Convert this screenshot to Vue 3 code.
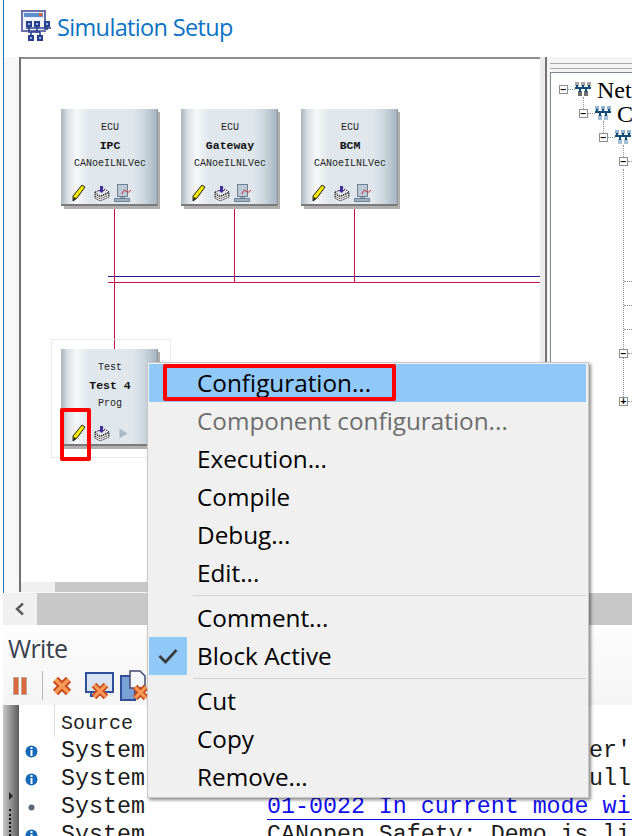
<script setup>
const ecus = [
  { key: 'ipc', top: 'ECU', name: 'IPC', bottom: 'CANoeILNLVec' },
  { key: 'gw', top: 'ECU', name: 'Gateway', bottom: 'CANoeILNLVec' },
  { key: 'bcm', top: 'ECU', name: 'BCM', bottom: 'CANoeILNLVec' }
]
const menuGroups = [
  [
    { label: 'Configuration...', active: true },
    { label: 'Component configuration...', disabled: true },
    { label: 'Execution...' },
    { label: 'Compile' },
    { label: 'Debug...' },
    { label: 'Edit...' }
  ],
  [{ label: 'Comment...' }, { label: 'Block Active', checked: true }],
  [{ label: 'Cut' }, { label: 'Copy' }, { label: 'Remove...' }]
]
const logs = [
  { icon: 'info', source: 'System', msg: "er'", cls: 'right' },
  { icon: 'info', source: 'System', msg: 'ull', cls: 'right' },
  { icon: 'dot', source: 'System', msg: '01-0022 In current mode wi', cls: 'link' },
  { icon: 'info', source: 'System', msg: 'CANopen Safety: Demo is li', cls: '' }
]
</script>

<template>
  <div class="page">
    <header class="head">
      <svg class="logo" width="32" height="32" viewBox="0 0 32 32">
        <rect x="1" y="1" width="23" height="20" fill="#eef1f8" stroke="#6a6fa8" stroke-width="2"/>
        <rect x="3" y="3" width="19" height="4" fill="#5b8fd0"/>
        <rect x="18" y="3" width="3" height="3" fill="#e0603a"/>
        <path d="M8 14v9M16 14v9M26 14v6M5 18h25M10 22v6M19 22v6M10 22h9" stroke="#2a3f8f" stroke-width="1.6" fill="none"/>
        <rect x="5" y="11" width="6" height="6" fill="#2a3f8f"/><rect x="7" y="13" width="2" height="2" fill="#9db4e0"/>
        <rect x="13" y="11" width="6" height="6" fill="#2a3f8f"/><rect x="15" y="13" width="2" height="2" fill="#9db4e0"/>
        <rect x="23" y="11" width="6" height="6" fill="#2a3f8f"/><rect x="25" y="13" width="2" height="2" fill="#9db4e0"/>
        <rect x="7" y="25" width="6" height="6" fill="#2a3f8f"/><rect x="9" y="27" width="2" height="2" fill="#9db4e0"/>
        <rect x="16" y="25" width="6" height="6" fill="#2a3f8f"/><rect x="18" y="27" width="2" height="2" fill="#9db4e0"/>
      </svg>
      <h1 class="title">Simulation Setup</h1>
    </header>

    <section class="work">
      <div class="leftcol">
        <div class="canvas">
          <span class="bus blue"></span>
          <span class="bus red"></span>
          <span class="drop d1"></span>
          <span class="drop d2"></span>
          <span class="drop d3"></span>
          <span class="drop d4"></span>

          <span class="frame"></span>

          <article v-for="(e, i) in ecus" :key="e.key" class="node" :class="'n' + i">
            <p class="t">{{ e.top }}</p>
            <p class="t b">{{ e.name }}</p>
            <p class="t">{{ e.bottom }}</p>
            <div class="tools">
              <svg width="16" height="18" viewBox="0 0 16 18"><path d="M11 1l3 2-8 11-4 3 0-5z" fill="#f5e800" stroke="#222" stroke-width="1"/><path d="M2 17l1-4 2 1.500z" fill="#111"/></svg>
              <svg class="stack" width="16" height="15" viewBox="0 0 16 15"><path d="M1 6l9-3 5 3-9 4zM1 6v2l5 3 9-4V6M1 8v2l5 3 9-4V7M1 10v2l5 3 9-4V9" fill="#fff" stroke="#222" stroke-width="1" stroke-dasharray="1.500 .8"/><path d="M6 0h3v4h2l-3.500 3L4 4h2z" fill="#3c2f96"/></svg>
              <svg class="mon" width="18" height="18" viewBox="0 0 18 18"><rect x="3.500" y="0.500" width="10" height="12" fill="#b9c9d6" stroke="#6f8090"/><path d="M6 13h5v2H6z" fill="#8da0b0"/><path d="M0.500 14.500h15v3H0.500z" fill="#9fb2c2" stroke="#6f8090"/><path d="M8 10q2-6 4-3t5-1" fill="none" stroke="#c8243c" stroke-width="1"/></svg>
            </div>
          </article>

          <article class="node n3">
            <p class="t">Test</p>
            <p class="t b">Test 4</p>
            <p class="t">Prog</p>
            <div class="tools">
              <svg width="16" height="18" viewBox="0 0 16 18"><path d="M11 1l3 2-8 11-4 3 0-5z" fill="#f5e800" stroke="#222" stroke-width="1"/><path d="M2 17l1-4 2 1.500z" fill="#111"/></svg>
              <svg class="stack" width="16" height="15" viewBox="0 0 16 15"><path d="M1 6l9-3 5 3-9 4zM1 6v2l5 3 9-4V6M1 8v2l5 3 9-4V7M1 10v2l5 3 9-4V9" fill="#fff" stroke="#222" stroke-width="1" stroke-dasharray="1.500 .8"/><path d="M6 0h3v4h2l-3.500 3L4 4h2z" fill="#3c2f96"/></svg>
              <svg class="play" width="9" height="11" viewBox="0 0 9 11"><path d="M0.500 0.500l8 5-8 5z" fill="#a9b9c6"/></svg>
            </div>
          </article>
          <span class="redbox small"></span>
        </div>
        <div class="hbar"><span class="hbtn"></span><span class="htrack"></span></div>
      </div>

      <div class="split"></div>

      <aside class="side">
        <div class="rules"></div>
        <div class="tree">
          <span class="vdot v1"></span><span class="vdot v2"></span><span class="vdot v3"></span><span class="vdot v4"></span>
          <span class="hdot h1"></span><span class="hdot h2"></span><span class="hdot h3"></span>
          <span class="hdot h4"></span><span class="hdot h5"></span><span class="hdot h6"></span><span class="hdot h7"></span><span class="hdot h8"></span><span class="hdot h9"></span>
          <span class="box b1">−</span><span class="box b2">−</span><span class="box b3">−</span><span class="box b4">−</span>
          <span class="box b5">−</span><span class="box b6">+</span>
          <svg class="net i1" width="16" height="14" viewBox="0 0 16 14"><path d="M0 0h4v4H0zM6 0h4v4H6zM12 0h4v4h-4z" fill="#a8a8a8"/><path d="M3 9h4v5H3zM9 9h4v5H9z" fill="#707070"/><path d="M0 6h16M2 3v3M8 3v3M14 3v3M5 6v4M11 6v4" stroke="#124a78" stroke-width="2" fill="none"/></svg>
          <svg class="net i2" width="16" height="14" viewBox="0 0 16 14"><path d="M0 0h4v4H0zM6 0h4v4H6zM12 0h4v4h-4z" fill="#90b4d2"/><path d="M3 9h4v5H3zM9 9h4v5H9z" fill="#a8c0d6"/><path d="M0 6h16M2 3v3M8 3v3M14 3v3M5 6v4M11 6v4" stroke="#124a78" stroke-width="2" fill="none"/></svg>
          <svg class="net i3" width="16" height="14" viewBox="0 0 16 14"><path d="M0 0h4v4H0zM6 0h4v4H6zM12 0h4v4h-4z" fill="#90b4d2"/><path d="M3 9h4v5H3zM9 9h4v5H9z" fill="#a8c0d6"/><path d="M0 6h16M2 3v3M8 3v3M14 3v3M5 6v4M11 6v4" stroke="#124a78" stroke-width="2" fill="none"/></svg>
          <span class="tx t1">Net</span>
          <span class="tx t2">CA</span>
        </div>
      </aside>
    </section>

    <div class="scroll">
      <button class="sbtn" type="button">
        <svg width="12" height="14" viewBox="0 0 12 14"><path d="M9 1.500L3 7l6 5.500" fill="none" stroke="#5a5a5a" stroke-width="2.400"/></svg>
      </button>
      <div class="track"></div>
    </div>

    <section class="write">
      <h2 class="wtitle">Write</h2>
      <div class="toolbar">
        <svg class="tb-pause" width="16" height="18" viewBox="0 0 16 18"><rect x="1.500" y="0.500" width="5" height="17" fill="#d9683c" stroke="#c0a898"/><rect x="9.500" y="0.500" width="5" height="17" fill="#d9683c" stroke="#c0a898"/></svg>
        <i class="tsep"></i>
        <svg class="tb-x" width="20" height="20" viewBox="0 0 20 20"><path d="M3.500 3.500l13 13M16.500 3.500l-13 13" stroke="#c94c1e" stroke-width="7.500"/><path d="M3.500 3.500l13 13M16.500 3.500l-13 13" stroke="#f79a58" stroke-width="3.500"/></svg>
        <svg class="tb-win" width="30" height="30" viewBox="0 0 30 30"><path d="M1 2h27v19H1z" fill="#d8e4f4" stroke="#2f4f98" stroke-width="2"/><path d="M6 21v4h8" fill="none" stroke="#2f4f98" stroke-width="2"/><path d="M9 14l12 12M21 14L9 26" stroke="#c94c1e" stroke-width="6.500"/><path d="M9 14l12 12M21 14L9 26" stroke="#f79a58" stroke-width="3"/></svg>
        <svg class="tb-file" width="30" height="31" viewBox="0 0 30 31"><path d="M1 6h14v24H1z" fill="#7aa0d8" stroke="#2f4f98" stroke-width="2"/><path d="M10 1h10l5 5v12H10z" fill="#f4f6fa" stroke="#444a70" stroke-width="1.500"/><path d="M15 17l11 11M26 17L15 28" stroke="#c94c1e" stroke-width="6.500"/><path d="M15 17l11 11M26 17L15 28" stroke="#f79a58" stroke-width="3"/></svg>
      </div>

      <div class="grid">
        <div class="strip">
          <span class="tri"></span>
          <span class="dots"></span>
        </div>
        <div class="table">
          <div class="thead"><span class="src">Source</span></div>
          <div v-for="(l, i) in logs" :key="i" class="row">
            <span class="ico">
              <svg v-if="l.icon === 'info'" width="13" height="13" viewBox="0 0 13 13"><circle cx="6.500" cy="6.500" r="6" fill="#1668b8"/><rect x="5.500" y="2" width="2" height="2" fill="#fff"/><rect x="5.500" y="5" width="2" height="6" fill="#fff"/></svg>
              <svg v-else width="7" height="7" viewBox="0 0 7 7"><circle cx="3.500" cy="3.500" r="3" fill="#606878"/></svg>
            </span>
            <span class="rsrc">{{ l.source }}</span>
            <span class="rmsg" :class="l.cls">{{ l.msg }}</span>
          </div>
        </div>
      </div>
    </section>

    <nav class="menu">
      <template v-for="(g, gi) in menuGroups" :key="gi">
        <div v-if="gi" class="sep"></div>
        <div v-for="m in g" :key="m.label" class="item" :class="{ on: m.active, off: m.disabled }">
          <span class="gut" :class="{ chk: m.checked }">
            <svg v-if="m.checked" width="20" height="16" viewBox="0 0 20 16"><path d="M1.500 8l6 6L18.500 2" fill="none" stroke="#3a3a3a" stroke-width="2.600"/></svg>
          </span>
          <span class="lab">{{ m.label }}</span>
        </div>
      </template>
      <span class="redbox big"></span>
    </nav>
  </div>
</template>

<style>
html, body { margin: 0; background: #fff; }
</style>

<style scoped>
.page { position: relative; width: 632px; height: 836px; overflow: hidden; background: #fff; display: flex; flex-direction: column; }
p, h1, h2 { margin: 0; font-weight: normal; }

.head { height: 57px; margin-left: 3px; border-left: 1px solid #1c6fb0; display: flex; align-items: center; padding-left: 17px; gap: 4px; box-sizing: border-box; flex: none; }
.logo { margin-top: -6px; }
.title { font: 23.500px/32px "Open Sans", sans-serif; color: #0a72c4; letter-spacing: -0.65px; margin-top: -3px; }

.work { height: 536px; flex: none; margin-left: 3px; border-left: 1px solid #1c6fb0; background: #f8f8f8; padding-left: 15px; display: flex; box-sizing: border-box; }
.leftcol { width: 521px; height: 535px; flex: none; border-left: 2px solid #707070; box-sizing: border-box; display: flex; flex-direction: column; }
.canvas { position: relative; height: 525px; background: #fff; border-top: 2px solid #8e8e8e; box-sizing: border-box; flex: none; }
.hbar { height: 10px; display: flex; flex: none; }
.hbtn { width: 34px; background: #efefef; }
.htrack { flex: 1; background: #c8c8c8; }
.split { width: 7px; background: #ececec; border-right: 2px solid #747474; box-sizing: border-box; flex: none; }
.side { flex: 1; min-width: 0; background: #f4f4f4; padding: 6px 0 0 3px; display: flex; flex-direction: column; }
.rules { height: 4px; flex: none; border-top: 1px solid #a8a8a8; border-bottom: 1px solid #a8a8a8; }
.tree { position: relative; margin-top: 3px; flex: 1; overflow: hidden; background: #fff; border-top: 1px solid #80868e; border-left: 1px solid #80868e; }

.bus { position: absolute; left: 87px; right: 0; height: 1px; }
.bus.blue { top: 217px; background: #20208c; }
.bus.red { top: 223px; background: #c8104c; }
.drop { position: absolute; width: 1px; background: #c8104c; }
.d1 { left: 93px; top: 150px; height: 73px; }
.d2 { left: 213px; top: 150px; height: 73px; }
.d3 { left: 333px; top: 150px; height: 73px; }
.d4 { left: 93px; top: 223px; height: 67px; }
.frame { position: absolute; left: 30px; top: 280px; width: 120px; height: 119px; border: 1px solid #ebebeb; box-sizing: border-box; }

.node { position: absolute; width: 96px; height: 97px; box-sizing: border-box; padding: 10px 0 0 2px; text-align: center; border-bottom: 2px solid #7a7a7a; background: linear-gradient(90deg, #a9b4bc 0%, #d9e0e6 7%, #f6f8fa 16%, #dfe6ec 30%, #dfe6ec 75%, #c9d4dc 88%, #a5b4c0 100%); box-shadow: 1px 0 0 #8a949c, 3px 3px 0 #b0b0b0; }
.n0 { left: 40px; top: 50px; }
.n1 { left: 160px; top: 50px; }
.n2 { left: 280px; top: 50px; }
.n3 { left: 40px; top: 290px; }
.t { font: 10px/18px "Liberation Mono", monospace; color: #222; }
.t.b { font-size: 11.500px; font-weight: bold; color: #111; }
.tools { position: absolute; left: 10px; top: 75px; display: flex; align-items: center; gap: 7px; }
.mon { margin-left: -3px; }
.play { margin-left: 2px; }

.redbox { position: absolute; border: 4px solid #f00; border-radius: 2px; box-sizing: border-box; }
.redbox.small { left: 39px; top: 349px; width: 31px; height: 53px; }
.redbox.big { left: 15px; top: 1px; width: 233px; height: 37px; }

.box { position: absolute; width: 7px; height: 7px; border: 1px solid #8e8e8e; background: #fff; font: bold 10px/7px "Liberation Sans", sans-serif; text-align: center; color: #000; }
.b1 { left: 8px; top: 12px; }
.b2 { left: 28px; top: 36px; }
.b3 { left: 48px; top: 60px; }
.b4 { left: 68px; top: 84px; }
.b5 { left: 68px; top: 276px; }
.b6 { left: 68px; top: 324px; }
.vdot { position: absolute; width: 0; border-left: 1px dotted #909090; }
.v1 { left: 32px; top: 24px; height: 12px; }
.v2 { left: 52px; top: 48px; height: 12px; }
.v3 { left: 72px; top: 72px; height: 12px; }
.v4 { left: 72px; top: 96px; height: 228px; }
.hdot { position: absolute; height: 0; border-top: 1px dotted #909090; }
.h1 { left: 17px; top: 16px; width: 7px; }
.h2 { left: 37px; top: 40px; width: 7px; }
.h3 { left: 57px; top: 64px; width: 7px; }
.h4 { left: 77px; top: 88px; width: 10px; }
.h5 { left: 73px; top: 208px; width: 12px; }
.h6 { left: 73px; top: 232px; width: 12px; }
.h7 { left: 73px; top: 256px; width: 12px; }
.h8 { left: 77px; top: 280px; width: 10px; }
.h9 { left: 77px; top: 328px; width: 10px; }
.net { position: absolute; }
.i1 { left: 24px; top: 9px; }
.i2 { left: 44px; top: 33px; }
.i3 { left: 64px; top: 57px; }
.tx { position: absolute; font: 24px/24px "Liberation Serif", serif; color: #000; white-space: nowrap; }
.t1 { left: 46px; top: 5px; }
.t2 { left: 66px; top: 29px; }

.scroll { height: 32px; flex: none; margin-left: 3px; display: flex; }
.sbtn { width: 34px; padding: 0; border: 0; background: #f0f0f0; display: flex; align-items: center; justify-content: center; }
.track { flex: 1; background: #c8c8c8; }

.write { flex: 1; margin-left: 3px; padding-top: 5px; background: linear-gradient(180deg, #fff 0, #fbfbfb 12px, #f6f6f6 70px, #f4f4f4 80px); display: flex; flex-direction: column; min-height: 0; }
.wtitle { font: 25px/36px "Open Sans", sans-serif; color: #37404c; padding-left: 5px; height: 36px; letter-spacing: -0.6px; }
.toolbar { height: 39px; flex: none; padding: 0 0 0 9px; display: flex; align-items: center; }
.tsep { width: 1px; height: 29px; background: #b8b8b8; margin-left: 14px; }
.tb-x { margin-left: 9px; }
.tb-win { margin-left: 13px; }
.tb-file { margin-left: 5px; }
.grid { flex: 1; display: flex; background: #fff; min-height: 0; }
.strip { position: relative; width: 16px; flex: none; background: linear-gradient(90deg, #c8c8c8, #5c5c5c); }
.tri { position: absolute; left: 6px; top: 87px; border-left: 4px solid #222; border-top: 4px solid transparent; border-bottom: 4px solid transparent; }
.dots { position: absolute; left: 6px; top: 104px; bottom: 0; border-left: 2px dotted #111; }
.table { flex: 1; min-width: 0; }
.thead { height: 32px; margin-left: 35px; padding-left: 6px; border-left: 1px solid #dcdcdc; box-sizing: border-box; font: 20px/38px "Liberation Mono", monospace; color: #222; }
.row { height: 28px; display: flex; align-items: center; font: 23.300px/28px "Liberation Mono", monospace; white-space: nowrap; color: #1c1c1c; }
.ico { width: 24px; display: flex; justify-content: center; flex: none; }
.rsrc { width: 206px; margin-left: 18px; flex: none; }
.rmsg { flex: 1; }
.rmsg.right { padding-left: 322px; }
.rmsg.link { color: #1010ee; border-bottom: 1px solid #1010ee; height: 27px; box-sizing: border-box; align-self: flex-start; }

.menu { position: absolute; left: 147px; top: 362px; width: 442px; height: 436px; box-sizing: border-box; padding: 1px 2px 1px 1px; background: #f0f0f0; border: 1px solid #c8c8c8; box-shadow: 2px 2px 3px rgba(0,0,0,.45); }
.item { height: 38px; display: flex; align-items: center; font: 24.300px/38px "Open Sans", sans-serif; color: #000; }
.item.on { background: #90c8f8; }
.item.off { color: #6d6d6d; }
.gut { width: 38px; height: 38px; display: flex; align-items: center; justify-content: center; flex: none; }
.gut.chk { background: #90c8f8; }
.lab { margin-left: 10px; white-space: nowrap; }
.sep { height: 1px; margin: 3px 0 3px 44px; background: #d4d4d4; }
</style>
